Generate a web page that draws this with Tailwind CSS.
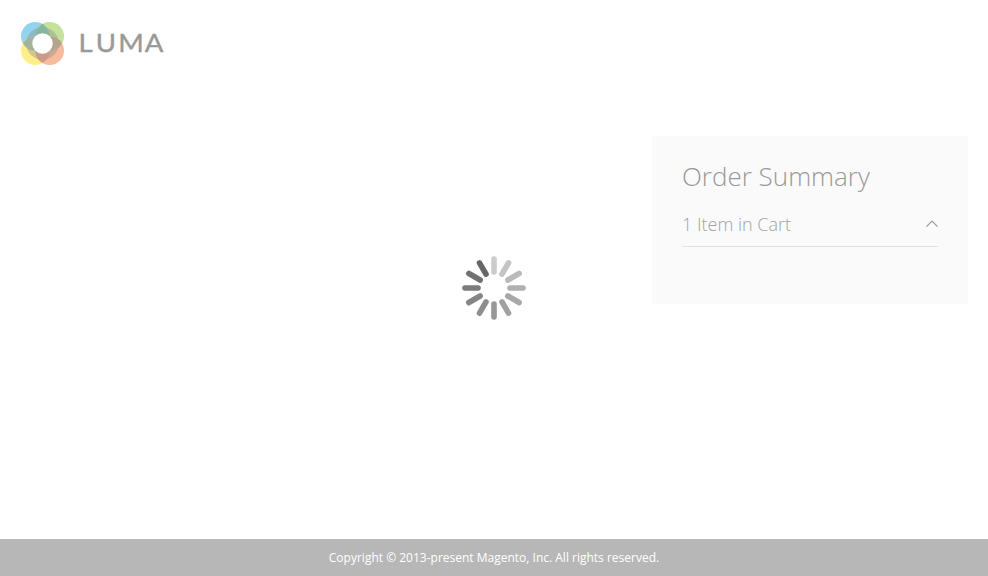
<!DOCTYPE html>
<html lang="en">
<head>
<meta charset="utf-8">
<title>Checkout</title>
<script src="https://cdn.jsdelivr.net/npm/@tailwindcss/browser@4"></script>
</head>
<body class="bg-white">
<div class="relative flex h-[576px] w-[988px] flex-col overflow-hidden font-['Open_Sans',sans-serif]">
  <header class="px-5 pt-5">
    <svg class="block h-12 w-[148px]" viewBox="20 20 148 48" role="img" aria-label="Luma">
      <defs>
        <clipPath id="tl"><circle cx="35.3" cy="36.3" r="14.3"/></clipPath>
        <clipPath id="br"><circle cx="49.7" cy="50.7" r="14.3"/></clipPath>
      </defs>
      <circle cx="35.3" cy="36.3" r="14.3" fill="#92d4ee"/>
      <circle cx="49.7" cy="36.3" r="14.3" fill="#c5e29d"/>
      <circle cx="35.3" cy="50.7" r="14.3" fill="#ffef89"/>
      <circle cx="49.7" cy="50.7" r="14.3" fill="#f9bb9c"/>
      <circle cx="42.5" cy="43.5" r="16.3" fill="#777" fill-opacity=".27"/>
      <circle cx="49.7" cy="36.3" r="14.3" fill="#80b99c" clip-path="url(#tl)"/>
      <circle cx="35.3" cy="50.7" r="14.3" fill="#a0b596" clip-path="url(#tl)"/>
      <circle cx="49.7" cy="36.3" r="14.3" fill="#b5a58c" clip-path="url(#br)"/>
      <circle cx="35.3" cy="50.7" r="14.3" fill="#d09a83" clip-path="url(#br)"/>
      <circle cx="42.5" cy="43.5" r="13" fill="none" stroke="#aaa" stroke-opacity=".15" stroke-width="6.5"/>
      <circle cx="42.5" cy="43.5" r="10.2" fill="#fff"/>
      <text transform="scale(1.08 1)" x="72.7 88.6 109.6 134.1" y="52.5" font-family="Lato,sans-serif" font-size="25.5" font-weight="400" fill="#999" stroke="#999" stroke-width=".4">LUMA</text>
    </svg>
  </header>
  <main class="flex flex-1 justify-end px-5 pt-[68px]">
    <aside class="h-[168px] w-[316px] bg-[#fafafa] px-[30px] pt-[22px]">
      <h1 class="text-[26px] leading-9 font-light text-[#999]">Order Summary</h1>
      <div class="mt-2.5 flex h-[43px] items-start justify-between border-b border-[#e3e3e3] pt-2">
        <span class="text-[18px] leading-[25px] font-light text-[#a3a3a3]">1 Item in Cart</span>
        <svg class="mt-2 h-2 w-3" viewBox="0 0 12 8" fill="none" stroke="#999" stroke-width="1.2"><path d="M.5 6.7 6 1.2l5.500 5.500"/></svg>
      </div>
    </aside>
  </main>
  <footer class="flex h-[37px] items-center justify-center bg-[#b7b7b7] text-[12px] text-white">Copyright © 2013-present Magento, Inc. All rights reserved.</footer>
  <svg class="absolute top-64 left-[462px] size-16" viewBox="-32 -32 64 64" stroke-width="5.6" stroke-linecap="round">
    <path d="M0-16V-29" stroke="#ccc"/>
    <path d="M0-16V-29" stroke="#c4c4c4" transform="rotate(30)"/>
    <path d="M0-16V-29" stroke="#bababa" transform="rotate(60)"/>
    <path d="M0-16V-29" stroke="#b0b0b0" transform="rotate(90)"/>
    <path d="M0-16V-29" stroke="#a8a8a8" transform="rotate(120)"/>
    <path d="M0-16V-29" stroke="#a0a0a0" transform="rotate(150)"/>
    <path d="M0-16V-29" stroke="#979797" transform="rotate(180)"/>
    <path d="M0-16V-29" stroke="#8e8e8e" transform="rotate(210)"/>
    <path d="M0-16V-29" stroke="#858585" transform="rotate(240)"/>
    <path d="M0-16V-29" stroke="#7b7b7b" transform="rotate(270)"/>
    <path d="M0-16V-29" stroke="#717171" transform="rotate(300)"/>
    <path d="M0-16V-29" stroke="#676767" transform="rotate(330)"/>
  </svg>
</div>
</body>
</html>
